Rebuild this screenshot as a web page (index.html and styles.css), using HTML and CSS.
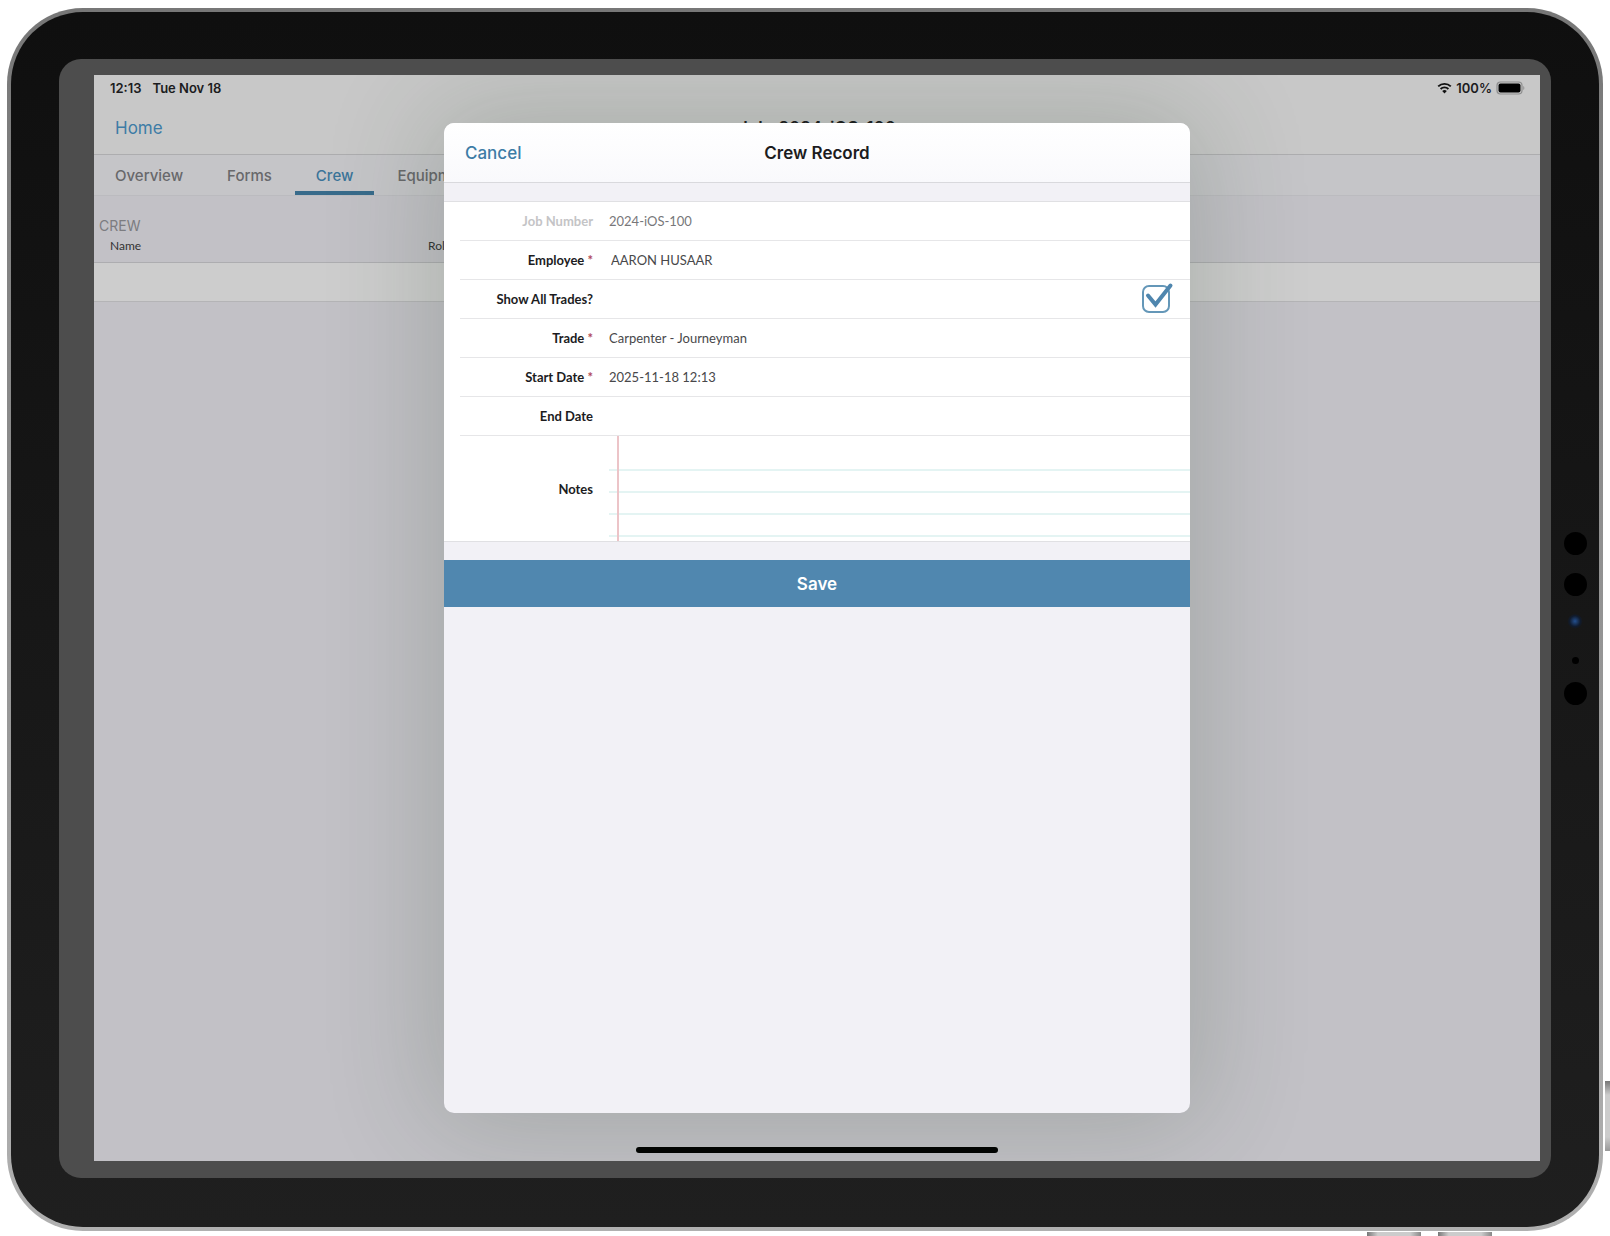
FILE: index.html
```
<!DOCTYPE html>
<html lang="en">
<head>
	<meta charset="utf-8" />
	<title>Crew Record</title>
	<link rel="stylesheet" href="styles.css">
</head>
<body>
	<div class="device">
		<div class="bezel">
			<div class="screen">

				<!-- Job page -->
				<div class="status">
					<span>12:13</span>
					<span>Tue Nov 18</span>
					<span class="status-right">
						<svg width="15" height="12" viewBox="0 0 15 12">
							<path d="M1.2 4.4a9 9 0 0 1 12.6 0M3.6 7a5.6 5.6 0 0 1 7.8 0" fill="none" stroke="#111" stroke-width="1.9" />
							<path d="M7.5 11.4L5.2 9a3.3 3.3 0 0 1 4.6 0z" fill="#111" />
						</svg>
						100%
						<svg width="29" height="14" viewBox="0 0 29 14">
							<rect x="1" y="1" width="25" height="12" rx="3.5" fill="none" stroke="#8d8d8d" stroke-width="1.2" />
							<rect x="2.500" y="2.500" width="22" height="9" rx="2" fill="#000" />
							<path d="M27.3 5v4c1.4-.5 1.4-3.500 0-4z" fill="#8d8d8d" />
						</svg>
					</span>
				</div>
				<div class="nav">
					<button class="link">Home</button>
					<h1>Job: 2024-iOS-100</h1>
				</div>
				<div class="tabs">
					<button>Overview</button>
					<button>Forms</button>
					<button class="active">Crew</button>
					<button>Equipment</button>
				</div>
				<table class="crew">
					<caption>CREW</caption>
					<thead><tr><th class="name">Name</th><th>Role</th></tr></thead>
					<tbody><tr><td></td><td></td></tr></tbody>
				</table>
				<div class="home-bar"></div>

				<!-- Crew record popup -->
				<form class="modal">
					<div class="modal-head">
						<button type="button" class="link">Cancel</button>
						<h2>Crew Record</h2>
					</div>
					<div class="fields">
						<div class="row disabled">
							<label for="job">Job Number</label>
							<input id="job" value="2024-iOS-100" readonly />
						</div>
						<div class="row">
							<label for="employee">Employee <i>*</i></label>
							<input id="employee" class="picker" value="AARON HUSAAR" />
						</div>
						<div class="row">
							<label for="all-trades">Show All Trades?</label>
							<span class="check">
								<input type="checkbox" id="all-trades" checked />
								<svg width="32" height="32" viewBox="0 0 32 32">
									<path d="M6 14.500L13.500 23.500L28.500 4.500" fill="none" stroke="#4f86ae" stroke-width="4" stroke-linecap="round" />
								</svg>
							</span>
						</div>
						<div class="row">
							<label for="trade">Trade <i>*</i></label>
							<input id="trade" value="Carpenter - Journeyman" />
						</div>
						<div class="row">
							<label for="start">Start Date <i>*</i></label>
							<input id="start" value="2025-11-18 12:13" />
						</div>
						<div class="row">
							<label for="end">End Date</label>
							<input id="end" />
						</div>
						<div class="row notes">
							<label for="notes">Notes</label>
							<textarea id="notes"></textarea>
						</div>
					</div>
					<button type="button" class="save">Save</button>
				</form>
			</div>
		</div>

		<!-- Camera and sensors -->
		<div class="sensors">
			<b></b>
			<b></b>
			<b class="lens"></b>
			<b class="mic"></b>
			<b></b>
		</div>
		<div class="key power"></div>
		<div class="key vol-up"></div>
		<div class="key vol-down"></div>
	</div>
</body>
</html>
```

FILE: styles.css
```
* { box-sizing: border-box; }
body {
	margin: 0;
	min-height: 100vh;
	padding: 8px 7px 5px;
	display: flex;
	overflow: hidden;
	background: #fff;
	font-family: Inter, "Liberation Sans", sans-serif;
	color: #1c1c1e;
}
button, input, textarea { margin: 0; padding: 0; border: 0; background: none; font: inherit; color: inherit; outline: 0; }
h1, h2 { margin: 0; font-size: 17px; font-weight: 600; text-align: center; }
.link { color: #3d7ca6; font-size: 17px; }

/* Tablet */
.device {
	flex: 1;
	position: relative;
	display: flex;
	padding: 47px 0 49px 48px;
	border: 4px solid transparent;
	border-radius: 76px;
	background: linear-gradient(#0f0f0f, #1f1f1f) padding-box, linear-gradient(#777, #b0b0b0) border-box;
}
.bezel { flex: 1; display: flex; padding: 16px 11px 17px 35px; border-radius: 22px; background: #4d4d4d; }
.screen { flex: 1; position: relative; display: flex; flex-direction: column; overflow: hidden; background: #c2c1c6; }
.sensors { width: 48px; display: flex; flex-direction: column; align-items: center; justify-content: center; gap: 18px; }
.sensors b { width: 23px; height: 23px; border-radius: 50%; background: #000; }
.sensors .lens { width: 16px; height: 16px; background: radial-gradient(circle at 50% 45%, #24508f, #101b2e 45%, transparent 65%); }
.sensors .mic { width: 7px; height: 7px; margin: 9px 0 0; }
.key { position: absolute; background: linear-gradient(90deg, #777, #ccc 20%, #ccc 80%, #888); }
.power { right: -12px; bottom: 76px; width: 6px; height: 70px; background: linear-gradient(#777, #ccc 20%, #ccc 80%, #999); }
.vol-up, .vol-down { bottom: -11px; width: 54px; height: 6px; }
.vol-up { right: 178px; }
.vol-down { right: 107px; }

/* Job page */
.status { display: flex; align-items: center; gap: 11px; height: 26px; padding: 0 15px 0 16px; background: #c8c8c8; font-size: 13px; font-weight: 600; }
.status-right { margin-left: auto; display: flex; align-items: center; gap: 4px; }
.nav { display: grid; grid-template-columns: 1fr auto 1fr; align-items: center; height: 54px; padding: 0 21px; border-bottom: 1px solid #adadaf; background: #c8c8c8; }
.nav .link { justify-self: start; }
.tabs { display: flex; gap: 2px; height: 41px; background: #c5c5c8; border-bottom: 1px solid #bbbbbf; }
.tabs button { padding: 5px 21px 0; border-bottom: 4px solid transparent; font-size: 15px; font-weight: 500; color: #68686b; }
.tabs .active { color: #3a7499; border-color: #386b8b; }
.crew { border-collapse: collapse; width: 100%; font-family: Lato, sans-serif; }
.crew caption { padding: 21px 5px 0; font: 14px/18px Inter, sans-serif; text-align: left; color: #7c7c80; }
.crew th { height: 27px; padding: 0 0 5px; font-size: 12px; font-weight: normal; text-align: left; color: #333; border-bottom: 1px solid #adadb0; }
.crew th.name { width: 334px; padding-left: 16px; }
.crew td { height: 39px; padding: 0; background: #cdcdcd; border-bottom: 1px solid #b4b4b6; }
.home-bar { width: 25%; height: 6px; margin: auto auto 8px; border-radius: 3px; background: #000; }

/* Popup */
.modal {
	position: absolute;
	top: 48px;
	bottom: 48px;
	left: 0;
	right: 0;
	margin: 0 auto;
	max-width: 746px;
	border-radius: 10px;
	overflow: hidden;
	background: #f2f1f6;
	box-shadow: 0 0 110px 12px rgba(40, 65, 40, .2);
}
.modal-head { display: grid; grid-template-columns: 1fr auto 1fr; align-items: center; height: 60px; padding: 0 21px; border-bottom: 1px solid #d9d9dd; background: linear-gradient(#fff, #f9f9fc); }
.modal-head .link { justify-self: start; font-weight: 500; }
.fields {
	margin: 18px 0;
	padding-left: 16px;
	border: 1px solid #e0e0e3;
	border-width: 1px 0;
	background: #fff;
	font-family: Lato, sans-serif;
	font-size: 13px;
}
.row { display: flex; align-items: center; gap: 16px; height: 39px; border-bottom: 1px solid #e6e6e8; }
.row label { width: 133px; text-align: right; font-weight: bold; }
.row label i { color: #b0485a; font-style: normal; }
.row input { color: #48484a; }
.row > input { flex: 1; }
.row .picker { padding-left: 2px; }
.disabled label { color: #c4c4c6; }
.row.disabled input { color: #77777a; }
.check { position: relative; margin-left: auto; padding-right: 20px; display: flex; }
.check input { appearance: none; width: 28px; height: 28px; border: 2px solid #6497b8; border-radius: 7px; }
.check svg { position: absolute; left: 0; top: -4px; pointer-events: none; }
.row.notes { height: 105px; border: 0; }
.notes textarea {
	flex: 1;
	align-self: stretch;
	resize: none;
	padding: 12px 20px;
	line-height: 22px;
	background:
		linear-gradient(#ecc4c8, #ecc4c8) 8px 0 / 2px 100% no-repeat,
		repeating-linear-gradient(transparent 0 20px, #e4f4f3 20px 22px) 0 13px / 100% 100% no-repeat;
}
.save { display: block; width: 100%; height: 47px; background: #5087af; color: #fff; font-size: 17px; font-weight: 600; }
```
